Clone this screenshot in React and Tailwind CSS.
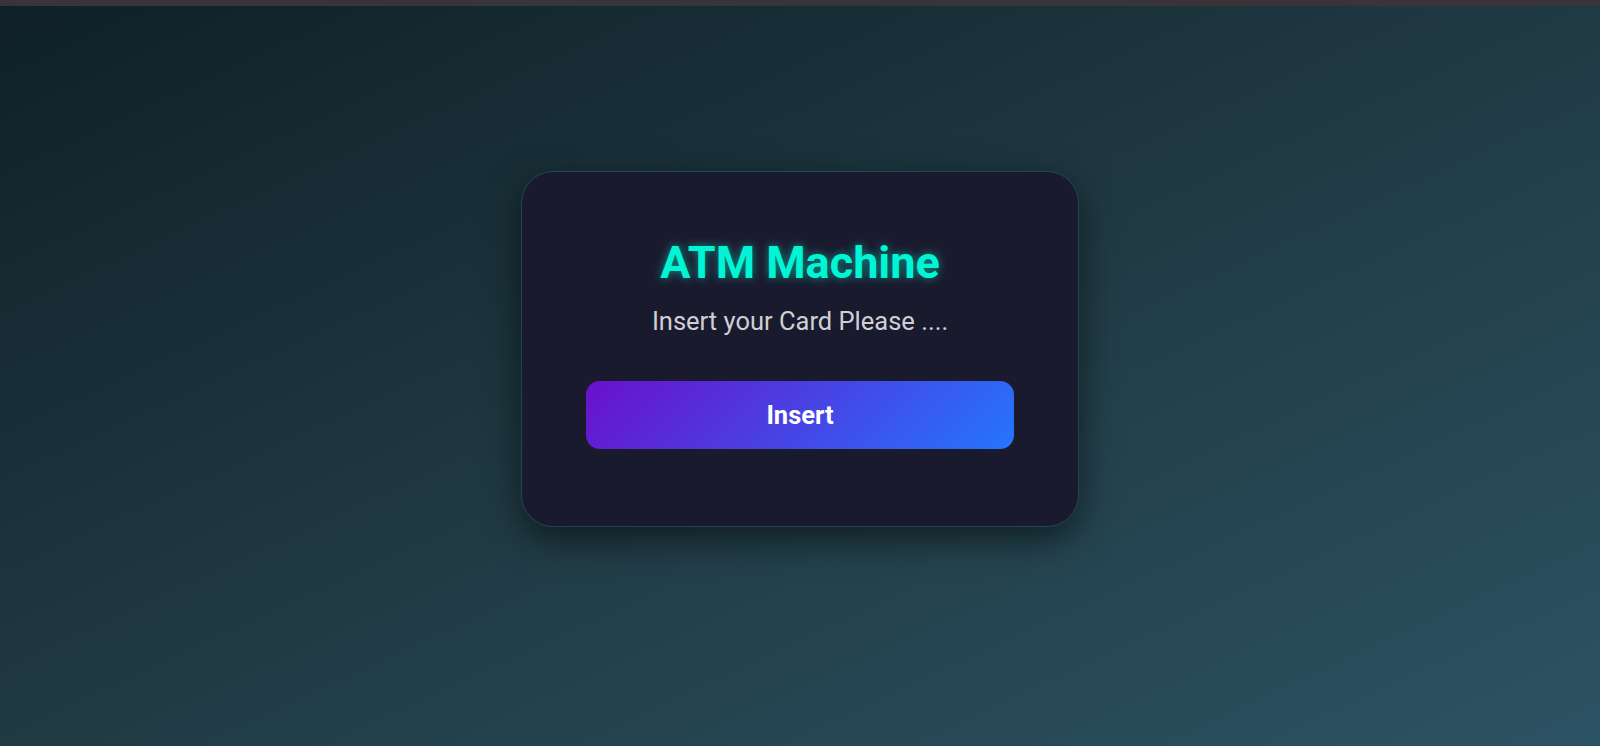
export default function App() {
  return (
    <div className="w-[1600px] h-[746px] flex flex-col overflow-hidden" style={{ fontFamily: "Roboto, 'Noto Sans', sans-serif" }}>
      <div className="h-[6px] bg-[#38343a] shrink-0" />
      <div className="flex-1 flex justify-center pt-[165px] bg-[linear-gradient(to_bottom_right,#0f2027,#203a43,#2c5364)]">
        <div className="w-[558px] h-[356px] rounded-[32px] bg-[#1a1a2e] border border-[#1c4a52] shadow-[0_12px_36px_rgba(0,0,0,0.55)] flex flex-col items-center pt-[66px] px-[64px]">
          <h1 className="text-[45px] leading-[50px] font-bold text-[#00f5d4] [text-shadow:0_0_10px_rgba(0,245,212,0.55)]">ATM Machine</h1>
          <p className="mt-[18px] text-[25.5px] leading-[30px] text-[#cfcfd6]">Insert your Card Please ....</p>
          <button className="mt-[45px] w-full h-[68px] rounded-[14px] bg-[linear-gradient(135deg,#6a11cb,#2575fc)] text-white text-[25.5px] font-bold">Insert</button>
        </div>
      </div>
    </div>
  );
}
